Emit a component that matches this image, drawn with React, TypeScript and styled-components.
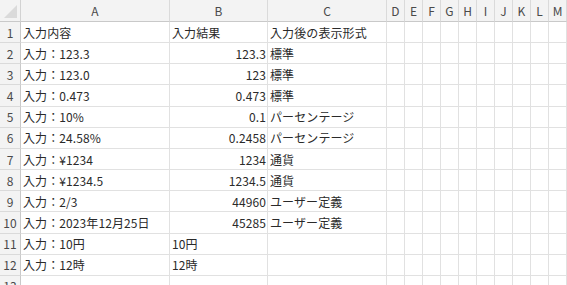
import { Fragment } from "react";
import styled, { createGlobalStyle } from "styled-components";

const GlobalStyle = createGlobalStyle`
  html, body {
    margin: 0;
    padding: 0;
    background: #ffffff;
  }
  body {
    font-family: "Noto Sans CJK JP", "Noto Sans", sans-serif;
  }
`;

const columns = ["A", "B", "C", "D", "E", "F", "G", "H", "I", "J", "K", "L", "M"];

type Row = [string, string, string];

const rows: Row[] = [
  ["入力内容", "入力結果", "入力後の表示形式"],
  ["入力：123.3", "123.3", "標準"],
  ["入力：123.0", "123", "標準"],
  ["入力：0.473", "0.473", "標準"],
  ["入力：10%", "0.1", "パーセンテージ"],
  ["入力：24.58%", "0.2458", "パーセンテージ"],
  ["入力：¥1234", "1234", "通貨"],
  ["入力：¥1234.5", "1234.5", "通貨"],
  ["入力：2/3", "44960", "ユーザー定義"],
  ["入力：2023年12月25日", "45285", "ユーザー定義"],
  ["入力：10円", "10円", ""],
  ["入力：12時", "12時", ""],
  ["", "", ""],
];

const isNumber = (v: string) => /^[0-9.]+$/.test(v);

const App = () => {
  return (
    <>
      <GlobalStyle />
      <Sheet>
        <Corner />
        {columns.map((c) => (
          <ColHeader key={c}>{c}</ColHeader>
        ))}
        {rows.map((r, i) => (
          <Fragment key={i}>
            <RowHeader>{i + 1}</RowHeader>
            <Cell>{r[0]}</Cell>
            <Cell $align={isNumber(r[1]) ? "right" : "left"}>{r[1]}</Cell>
            <Cell>{r[2]}</Cell>
            {columns.slice(3).map((c) => (
              <Cell key={c} />
            ))}
          </Fragment>
        ))}
      </Sheet>
    </>
  );
};

export default App;

const Sheet = styled.div`
  display: grid;
  grid-template-columns: 21px 149px 98px 119px repeat(10, 18px);
  grid-template-rows: 22px repeat(13, 21.17px);
  width: 567px;
  height: 285px;
  overflow: hidden;
  background: #ffffff;
`;

const Corner = styled.div`
  position: relative;
  background: #f3f3f3;
  border-right: 1px solid #d2d2d2;
  border-bottom: 1px solid #c9c9c9;

  &::after {
    content: "";
    position: absolute;
    right: 3px;
    bottom: 3px;
    width: 13px;
    height: 13px;
    background: #dadada;
    clip-path: polygon(100% 0, 100% 100%, 0 100%);
  }
`;

const ColHeader = styled.div`
  display: flex;
  align-items: center;
  justify-content: center;
  background: #f3f3f3;
  border-right: 1px solid #dadada;
  border-bottom: 1px solid #c9c9c9;
  color: #4a4a4a;
  font-size: 12px;
`;

const RowHeader = styled.div`
  display: flex;
  align-items: center;
  justify-content: center;
  background: #f3f3f3;
  border-right: 1px solid #c9c9c9;
  border-bottom: 1px solid #dadada;
  color: #4a4a4a;
  font-size: 12px;
`;

const Cell = styled.div<{ $align?: "left" | "right" }>`
  display: flex;
  align-items: center;
  justify-content: ${(p) => (p.$align === "right" ? "flex-end" : "flex-start")};
  padding: 0 ${(p) => (p.$align === "right" ? "1px" : "0")} 0 2px;
  border-right: 1px solid #e1e1e1;
  border-bottom: 1px solid #e1e1e1;
  color: #2a2a2a;
  font-size: 12px;
  letter-spacing: 0.1px;
  white-space: nowrap;
  overflow: hidden;
`;
